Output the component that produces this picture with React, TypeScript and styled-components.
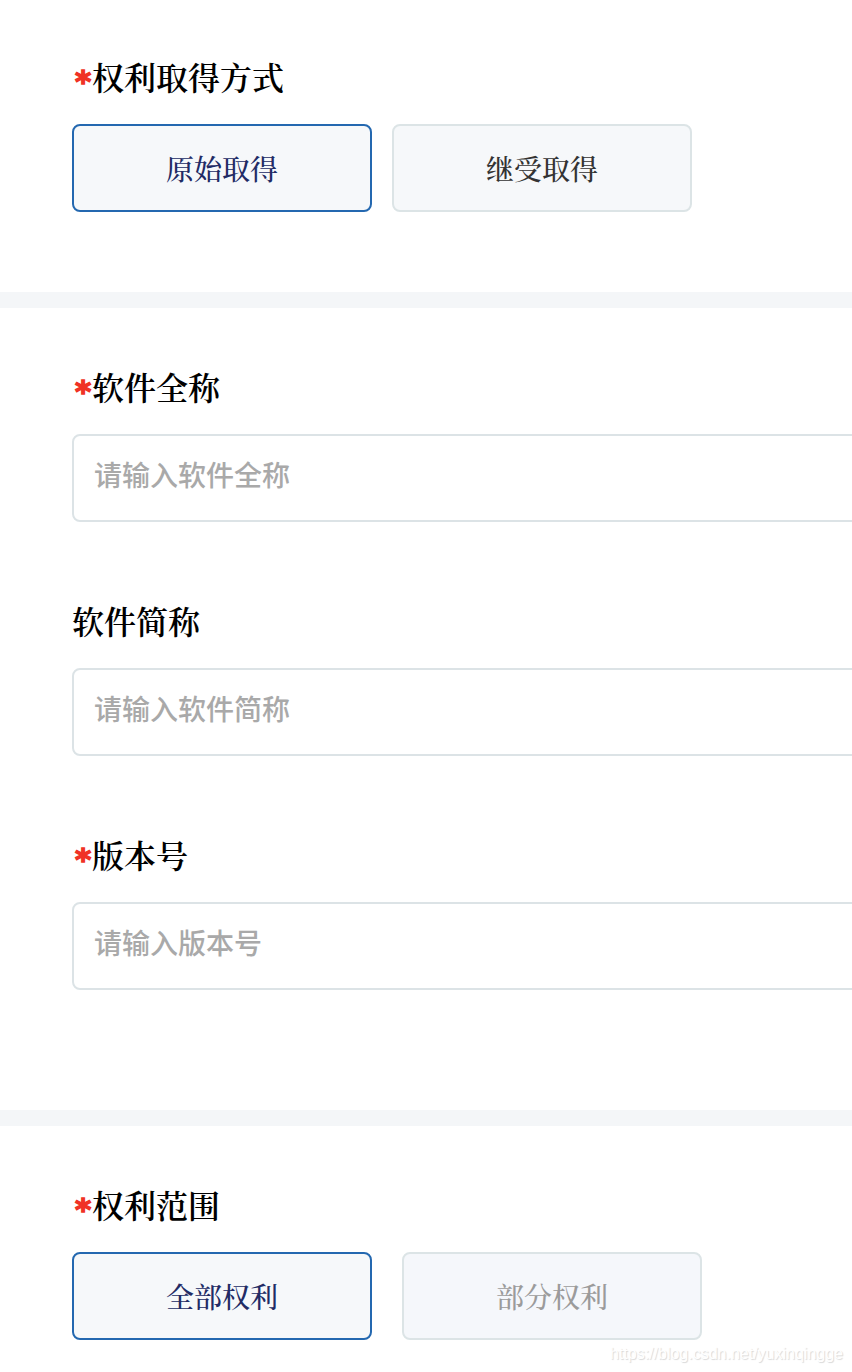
import { FC, useState } from "react";
import styled, { createGlobalStyle } from "styled-components";

interface IOption {
  label: string;
  disabled?: boolean;
}

interface IOptionGroup {
  options: IOption[];
  gap: number;
}

interface IField {
  label: string;
  required?: boolean;
}

const acquireOptions: IOption[] = [{ label: "原始取得" }, { label: "继受取得" }];

const scopeOptions: IOption[] = [
  { label: "全部权利" },
  { label: "部分权利", disabled: true },
];

const fields: IField[] = [
  { label: "软件全称", required: true },
  { label: "软件简称" },
  { label: "版本号", required: true },
];

const FieldLabel: FC<IField> = ({ label, required }) => (
  <Label>
    {required && <Star>*</Star>}
    {label}
  </Label>
);

const OptionGroup: FC<IOptionGroup> = ({ options, gap }) => {
  const [selected, setSelected] = useState(options[0].label);

  return (
    <Options $gap={gap}>
      {options.map(({ label, disabled }) => (
        <Option
          key={label}
          type="button"
          disabled={disabled}
          $active={label === selected}
          onClick={() => setSelected(label)}
        >
          {label}
        </Option>
      ))}
    </Options>
  );
};

const App: FC = () => (
  <>
    <GlobalStyle />
    <Page>
      <Section $top={52} $bottom={80}>
        <FieldLabel label="权利取得方式" required />
        <OptionGroup options={acquireOptions} gap={20} />
      </Section>

      <Divider />

      <Section $top={54} $bottom={120}>
        <Fields>
          {fields.map(({ label, required }) => (
            <div key={label}>
              <FieldLabel label={label} required={required} />
              <Input type="text" placeholder={`请输入${label}`} />
            </div>
          ))}
        </Fields>
      </Section>

      <Divider />

      <Section $top={54} $bottom={32}>
        <FieldLabel label="权利范围" required />
        <OptionGroup options={scopeOptions} gap={30} />
      </Section>

      <Watermark>https://blog.csdn.net/yuxinqingge</Watermark>
    </Page>
  </>
);

export default App;

const GlobalStyle = createGlobalStyle`
  * {
    box-sizing: border-box;
  }

  body {
    margin: 0;
    background: #fff;
    overflow: hidden;
  }
`;

const Page = styled.main`
  position: relative;
  height: 1372px;
  overflow: hidden;

  font-family: "Songti SC", "Noto Serif CJK SC", "Noto Sans CJK SC", serif;
`;

const Section = styled.section<{ $top: number; $bottom: number }>`
  padding: ${({ $top, $bottom }) => `${$top}px 0 ${$bottom}px 72px`};
`;

const Divider = styled.div`
  height: 16px;

  background: #f4f6f8;
`;

const Label = styled.div`
  display: flex;
  height: 48px;
  margin-bottom: 24px;

  font-size: 32px;
  line-height: 48px;
  font-weight: 600;
  color: #000;
`;

const Star = styled.span`
  width: 20px;
  padding-left: 3px;

  font-family: "DejaVu Sans", sans-serif;
  font-size: 31px;
  line-height: 58px;
  font-weight: 700;
  color: #f03224;
  -webkit-text-stroke: 1.4px #f03224;
`;

const Options = styled.div<{ $gap: number }>`
  display: flex;
  column-gap: ${({ $gap }) => $gap}px;
`;

const Option = styled.button<{ $active: boolean }>`
  width: 300px;
  height: 88px;
  padding: 0;

  border: 2px solid ${({ $active }) => ($active ? "#2468b0" : "#dce4e6")};
  border-radius: 8px;
  background: #f6f8fa;

  font-family: inherit;
  font-size: 28px;
  line-height: 40px;
  font-weight: 500;
  color: ${({ $active }) => ($active ? "#222b65" : "#333")};

  &:disabled {
    background: #f5f7fb;
    color: #9b9b9b;
  }
`;

const Fields = styled.div`
  display: flex;
  flex-direction: column;
  row-gap: 74px;
`;

const Input = styled.input`
  display: block;
  width: 860px;
  height: 88px;
  padding: 0 20px 8px;

  border: 2px solid #dce3e6;
  border-radius: 8px;
  outline: none;
  background: #fff;

  font-family: "Noto Sans CJK SC", sans-serif;
  font-size: 28px;
  font-weight: 500;
  color: #333;

  &::placeholder {
    color: #a9a9a9;
  }
`;

const Watermark = styled.div`
  position: absolute;
  right: 9px;
  bottom: 8px;

  font-family: "Liberation Sans", Arial, sans-serif;
  font-size: 16px;
  line-height: 20px;
  color: #fff;
  text-shadow: 1px 1px 1px #d8d8d8;
`;
